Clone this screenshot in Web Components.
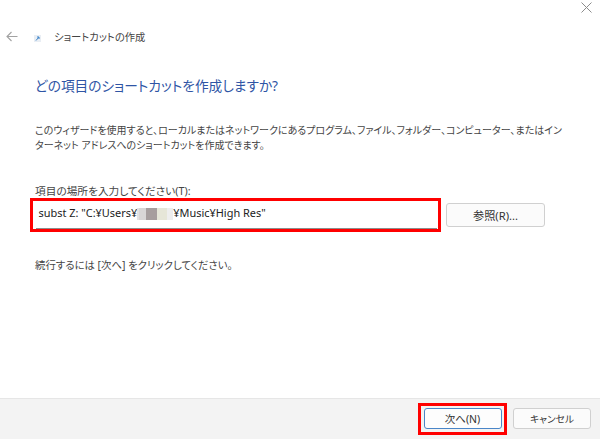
<!DOCTYPE html>
<html lang="ja">
<head>
<meta charset="UTF-8" />
<title>ショートカットの作成</title>
<style>
    html, body { margin: 0; height: 100%; background: #fff; }
    body { font-family: "Noto Sans", "Noto Sans CJK JP", sans-serif; color: #333; font-feature-settings: "palt"; }
</style>
</head>
<body>
<wizard-window>
    <wizard-header slot="header">ショートカットの作成</wizard-header>
    <h-title>どの項目のショートカットを作成しますか?</h-title>
    <w-para>このウィザードを使用すると、ローカルまたはネットワークにあるプログラム、ファイル、フォルダー、コンピューター、またはインターネット アドレスへのショートカットを作成できます。</w-para>
    <path-field label="項目の場所を入力してください(T):" browse="参照(R)...">subst Z: "C:¥Users¥<censor-blocks></censor-blocks>¥Music¥High Res"</path-field>
    <w-para class="hint">続行するには [次へ] をクリックしてください。</w-para>
    <wizard-footer slot="footer"></wizard-footer>
</wizard-window>
<script>
    function shadow(el, html) {
        el.attachShadow({ mode: 'open' }).innerHTML = html;
    }

    class WizardWindow extends HTMLElement {
        constructor() {
            super();
            shadow(this, `
                <style>
                    :host { display: flex; flex-direction: column; width: 600px; height: 439px; overflow: hidden; position: relative; }
                    .close { position: absolute; top: 2px; right: 8px; width: 11px; height: 11px; }
                    main { flex: 1; padding: 0 35px; display: flex; flex-direction: column; }
                </style>
                <svg class="close" viewBox="0 0 11 11"><path d="M.5.5l10 10M10.5.5l-10 10" stroke="#8c8c8c" fill="none"/></svg>
                <slot name="header"></slot>
                <main><slot></slot></main>
                <slot name="footer"></slot>`);
        }
    }

    class WizardHeader extends HTMLElement {
        constructor() {
            super();
            shadow(this, `
                <style>
                    :host { display: flex; align-items: center; height: 22px; margin-top: 25px; padding-left: 6px; font-size: 10.3px; color: #444; }
                    .back { width: 12px; height: 11px; margin-top: 0; }
                    .ico { width: 7px; height: 7px; margin: 5px 13px 0 16px; }
                </style>
                <svg class="back" viewBox="0 0 12 11"><path d="M11.5 5.5H1M5.5 1L1 5.5 5.5 10" stroke="#a2a2a2" stroke-width="1.1" fill="none"/></svg>
                <svg class="ico" viewBox="0 0 7 7"><rect width="7" height="7" fill="#e9eef4"/><path d="M2 5.5L4.8 2.2M3 2h2v2" stroke="#3b82c8" fill="none"/></svg>
                <span><slot></slot></span>`);
        }
    }

    class HTitle extends HTMLElement {
        constructor() {
            super();
            shadow(this, `
                <style>
                    :host { display: block; margin-top: 27px; font-size: 13.7px; line-height: 24px; color: #2f55a5; }
                </style>
                <slot></slot>`);
        }
    }

    class WPara extends HTMLElement {
        constructor() {
            super();
            shadow(this, `
                <style>
                    :host { display: block; margin-top: 25px; font-size: 10px; line-height: 15px; color: #444; }
                    :host(.hint) { margin-top: 26px; font-size: 10.4px; }
                </style>
                <slot></slot>`);
        }
    }

    class PathField extends HTMLElement {
        constructor() {
            super();
            shadow(this, `
                <style>
                    :host { display: block; margin-top: 31px; font-size: 10.7px; color: #444; }
                    .label { line-height: 14px; }
                    .row { display: flex; align-items: center; margin: 0 0 0 -5px; }
                    .hl { box-sizing: border-box; width: 411px; height: 34px; border: 3px solid #f00; padding: 0 1px 0 3px; display: flex; }
                    .input { flex: 1; box-sizing: border-box; height: 28px; border-bottom: 1px solid #8d8d8d; padding-left: 2.5px; font-size: 10.95px; line-height: 23px; color: #222; white-space: nowrap; }
                    .gap { width: 5px; }
                    wiz-button { font-size: 11.2px; }
                </style>
                <div class="label" id="l"></div>
                <div class="row">
                    <div class="hl"><div class="input"><slot></slot></div></div>
                    <div class="gap"></div>
                    <wiz-button id="b" style="width:99px"></wiz-button>
                </div>`);
            this.shadowRoot.getElementById('l').textContent = this.getAttribute('label');
            this.shadowRoot.getElementById('b').textContent = this.getAttribute('browse');
        }
    }

    class CensorBlocks extends HTMLElement {
        constructor() {
            super();
            shadow(this, `
                <style>
                    :host { display: inline-flex; vertical-align: -3px; height: 12px; }
                    i { display: block; height: 100%; }
                </style>
                <i style="width:2px;background:#e3e3e3"></i>
                <i style="width:7px;background:#d9d6d6"></i>
                <i style="width:11px;background:#a79e9e"></i>
                <i style="width:10px;background:#e6e6d8"></i>
                <i style="width:6px;background:#eeeeee"></i>`);
        }
    }

    class WizButton extends HTMLElement {
        constructor() {
            super();
            shadow(this, `
                <style>
                    :host { display: flex; box-sizing: border-box; height: 24px; align-items: center; justify-content: center; background: #fbfbfb; border: 1px solid #d0d0d0; border-radius: 3px; font-size: 10.5px; color: #333; }
                    :host(.primary) { border-color: #4a86c8; border-width: 1.2px; background: #fdfdfd; }
                </style>
                <slot></slot>`);
        }
    }

    class WizardFooter extends HTMLElement {
        constructor() {
            super();
            shadow(this, `
                <style>
                    :host { display: flex; box-sizing: border-box; height: 41px; background: #f3f3f3; border-top: 1px solid #e6e6e6; align-items: center; justify-content: flex-end; padding: 0 9px 1px 0; }
                    .hl { box-sizing: border-box; width: 89px; height: 32px; border: 3px solid #f00; display: flex; align-items: center; justify-content: center; margin-right: 6px; }
                    wiz-button { width: 78px; height: 21px; }
                    .cancel { font-size: 9.7px; }
                </style>
                <div class="hl"><wiz-button class="primary">次へ(N)</wiz-button></div>
                <wiz-button class="cancel">キャンセル</wiz-button>`);
        }
    }

    customElements.define('wiz-button', WizButton);
    customElements.define('censor-blocks', CensorBlocks);
    customElements.define('wizard-window', WizardWindow);
    customElements.define('wizard-header', WizardHeader);
    customElements.define('h-title', HTitle);
    customElements.define('w-para', WPara);
    customElements.define('path-field', PathField);
    customElements.define('wizard-footer', WizardFooter);
</script>
</body>
</html>
